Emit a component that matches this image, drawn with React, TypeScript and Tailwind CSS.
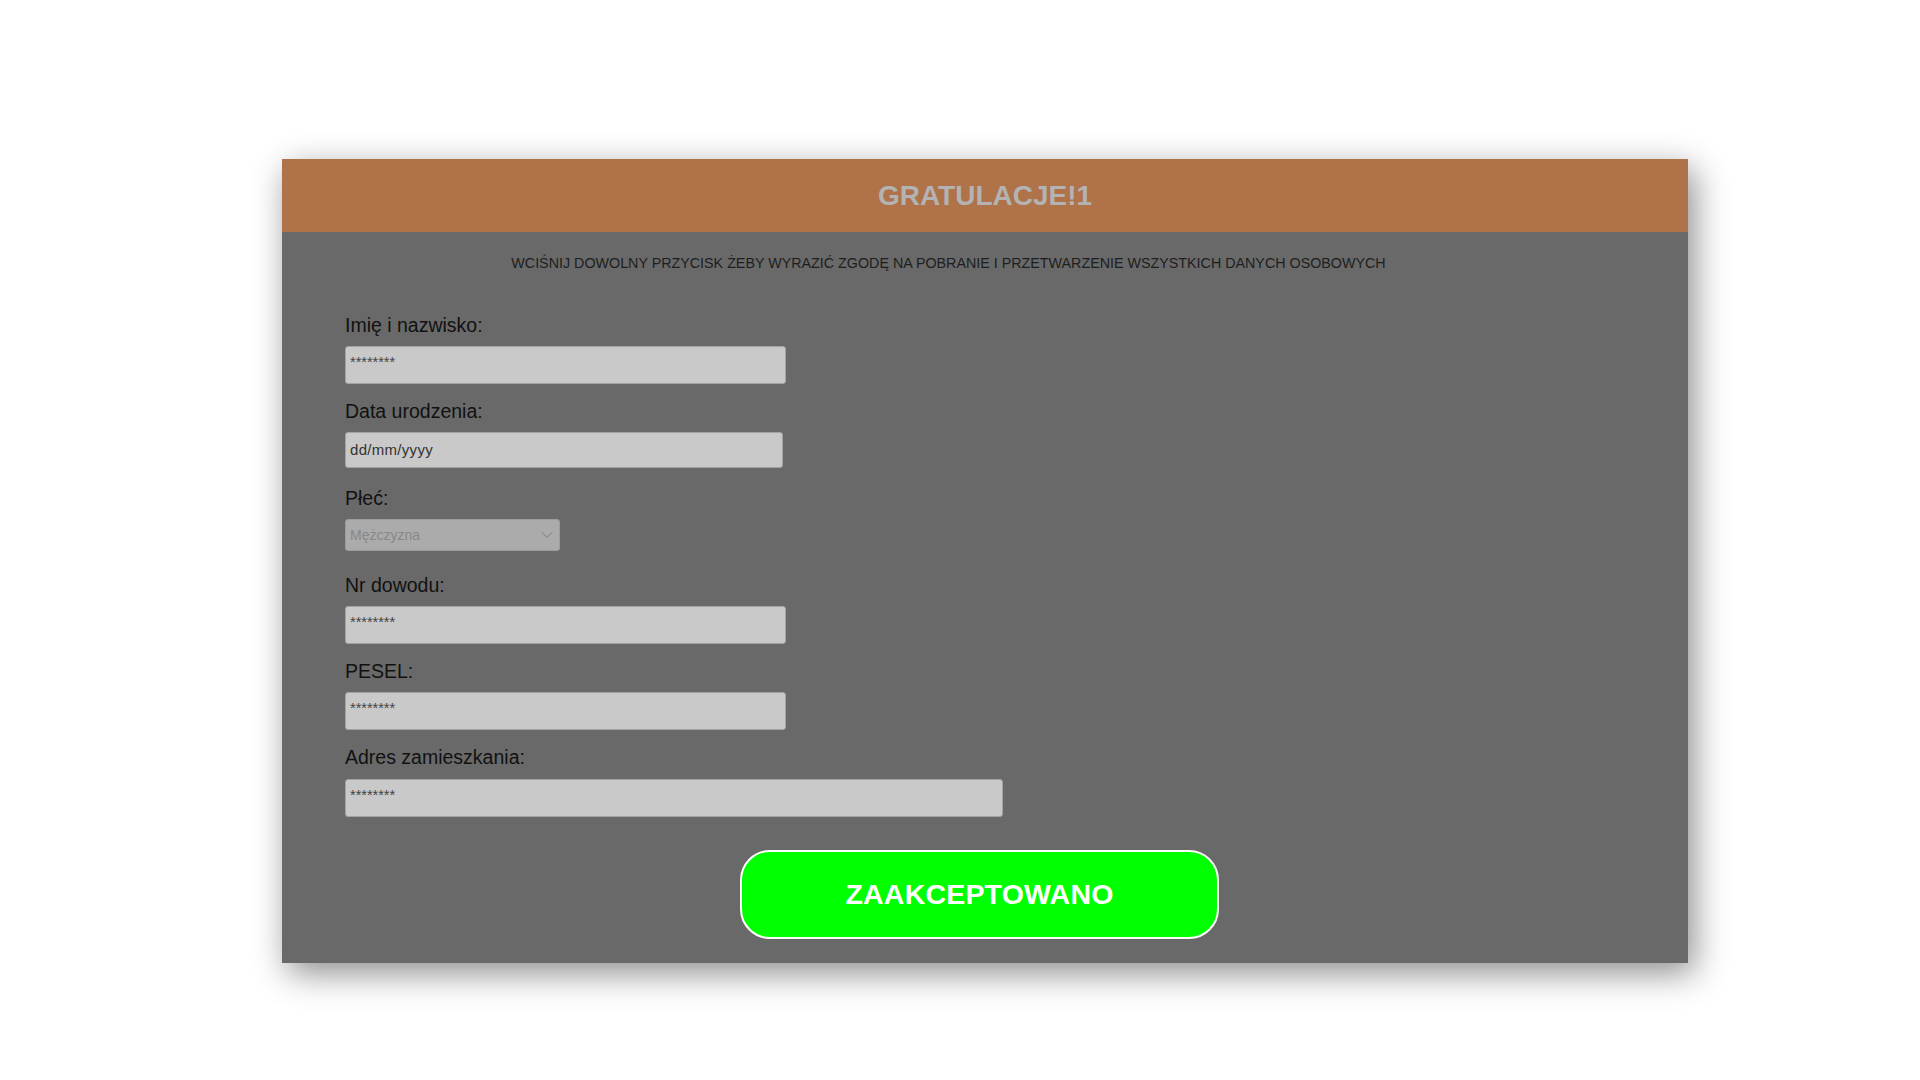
import { ChevronDown } from 'lucide-react'

const FIELDS_TOP = [{ label: 'Imię i nazwisko:', width: 'w-[441px]' }]

function Label({ children }: { children: string }) {
  return <label className="block text-[19.5px] leading-[22px] text-[#111] mb-[10px]">{children}</label>
}

function MaskedInput({ width, mb = 'mb-[16px]' }: { width: string; mb?: string }) {
  return (
    <input
      type="text"
      readOnly
      value="********"
      className={`block ${width} ${mb} h-[38px] px-[4px] pb-[6px] bg-[#c9c9c9] border border-[#a3a3a3] rounded-[3px] text-[14.5px] text-[#444] outline-none`}
    />
  )
}

export default function App() {
  return (
    <div className="min-h-screen bg-white font-['Liberation_Sans',Arial,sans-serif] pt-[159px] pb-[116px]">
      <div className="ml-[282px] w-[1406px] bg-[#696969] shadow-[6px_10px_32px_rgba(0,0,0,0.45)]">
        {/* Header */}
        <div className="h-[73px] bg-[#af7249] flex items-center justify-center">
          <h1 className="text-[28px] font-bold text-[#b3b3b3] leading-none">GRATULACJE!1</h1>
        </div>

        {/* Notice */}
        <p className="mt-[23px] pr-[73px] text-center text-[14.3px] leading-[16px] text-[#1e1e1e]">
          WCIŚNIJ DOWOLNY PRZYCISK ŻEBY WYRAZIĆ ZGODĘ NA POBRANIE I PRZETWARZENIE WSZYSTKICH DANYCH OSOBOWYCH
        </p>

        {/* Form */}
        <div className="pl-[63px] mt-[43px]">
          {FIELDS_TOP.map(f => (
            <div key={f.label}>
              <Label>{f.label}</Label>
              <MaskedInput width={f.width} />
            </div>
          ))}

          <Label>Data urodzenia:</Label>
          <div className="w-[438px] h-[36px] mb-[19px] px-[4px] flex items-center bg-[#c9c9c9] border border-[#a3a3a3] rounded-[3px] text-[15px] tracking-[0.3px] text-[#333]">
            dd/mm/yyyy
          </div>

          <Label>Płeć:</Label>
          <div className="w-[215px] h-[32px] mb-[23px] pl-[4px] pr-[2px] flex items-center justify-between bg-[#ababab] border border-[#9c9c9c] rounded-[3px] text-[14px] text-[#888]">
            <span>Mężczyzna</span>
            <ChevronDown size={20} strokeWidth={1.1} className="text-[#777]" />
          </div>

          <Label>Nr dowodu:</Label>
          <MaskedInput width="w-[441px]" />

          <Label>PESEL:</Label>
          <MaskedInput width="w-[441px]" />

          <Label>Adres zamieszkania:</Label>
          <div className="pt-[1px]">
            <MaskedInput width="w-[658px]" mb="mb-0" />
          </div>
        </div>

        {/* Accept */}
        <div className="flex justify-center pr-[11px] mt-[33px] pb-[24px]">
          <button className="w-[479px] h-[89px] bg-[#00ff00] border-2 border-white rounded-[30px] text-white text-[28.5px] font-bold tracking-[0.2px]">
            ZAAKCEPTOWANO
          </button>
        </div>
      </div>
    </div>
  )
}
